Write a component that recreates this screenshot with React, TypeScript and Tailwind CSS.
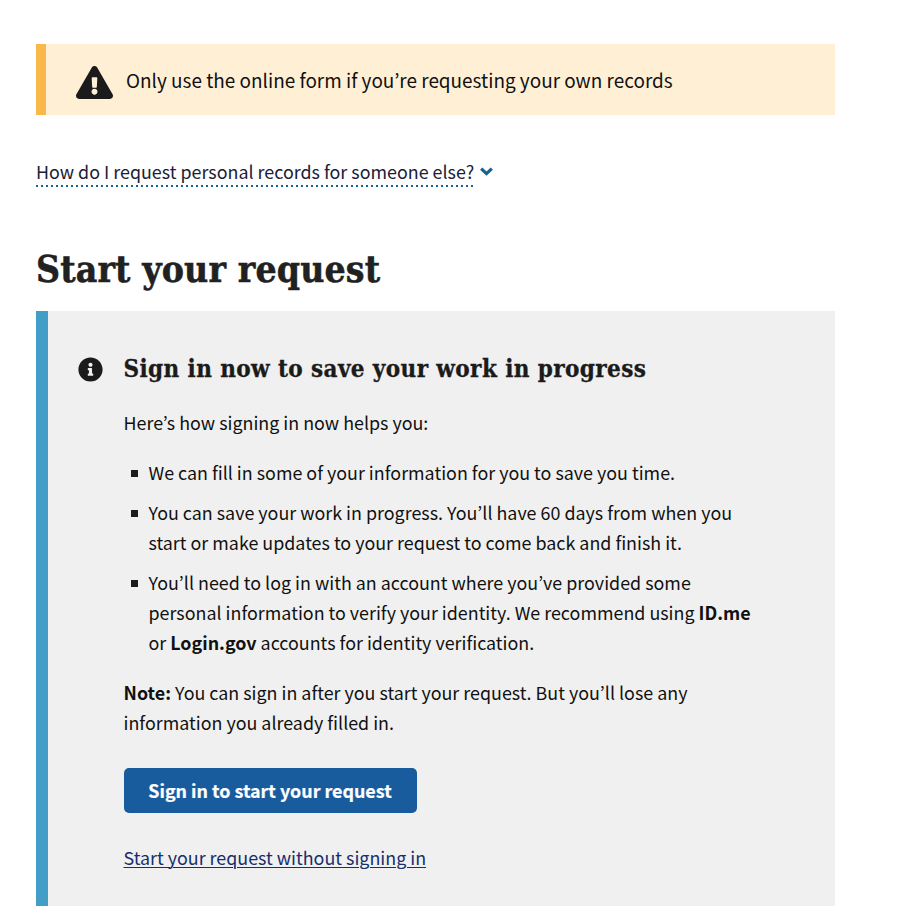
import type { ReactNode } from "react";
import { FaExclamationTriangle, FaInfoCircle } from "react-icons/fa";

function Line({ children }: { children: ReactNode }) {
  return <span className="block whitespace-nowrap">{children}</span>;
}

function Item({ children }: { children: ReactNode }) {
  return (
    <li className="flex">
      <span className="mt-[13px] mr-[11px] ml-[7.5px] h-[6.5px] w-[6.5px] shrink-0 bg-[#1b1b1b]" />
      <div>{children}</div>
    </li>
  );
}

export default function App() {
  return (
    <main className="h-[906px] w-[900px] overflow-hidden bg-white pt-[44px] pl-[36px] font-['Noto_Sans_CJK_KR','Noto_Sans',sans-serif] text-[17.89px] leading-[30px] text-[#111111]">
      <div className="flex h-[71px] w-[799px] border-l-[10px] border-[#fab84a] bg-[#fff0d5] pt-[21px] pl-[30px]">
        <FaExclamationTriangle className="mt-[1px] h-[33px] w-[37px] shrink-0 text-[#1b1b1b]" />
        <p className="ml-[13px] text-[18.95px] whitespace-nowrap">Only use the online form if you’re requesting your own records</p>
      </div>

      <div className="mt-[41px] flex h-[31px]">
        <button className="flex h-[31px] flex-col whitespace-nowrap text-[#1a2036]">
          <span className="h-[29px] leading-[30px]">How do I request personal records for someone else?</span>
          <span className="h-[2px] w-full bg-[repeating-linear-gradient(90deg,#16648f_0px,#16648f_2px,transparent_2px,transparent_5px)]" />
        </button>
        <svg className="mt-[11px] ml-[6.3px] h-[9px] w-[13px] text-[#16648f]" viewBox="0 0 13 9" fill="none" stroke="currentColor" strokeWidth="3.3">
          <path d="M1.2 1.6 L6.5 6.6 L11.8 1.6" />
        </svg>
      </div>

      <h2 className="mt-[57px] h-[50px] font-['DejaVu_Serif_Condensed','DejaVu_Serif',serif] text-[37px] leading-[50px] font-bold tracking-[0.13px] whitespace-nowrap text-[#212121] [-webkit-text-stroke:0.5px_#212121]">
        Start your request
      </h2>

      <section className="mt-[17px] flex h-[620px] w-[799px] border-l-[12px] border-[#439ec7] bg-[#f0f0f0] pt-[42px] pl-[30px]">
        <FaInfoCircle className="mt-[4px] h-[25px] w-[25px] shrink-0 text-[#1b1b1b]" />
        <div className="ml-[20.5px]">
          <h3 className="h-[30px] font-['DejaVu_Serif_Condensed','DejaVu_Serif',serif] text-[24px] leading-[31px] font-bold tracking-[0.39px] whitespace-nowrap text-[#1b1b1b] [-webkit-text-stroke:0.3px_#1b1b1b]">
            Sign in now to save your work in progress
          </h3>
          <p className="mt-[24px]">Here’s how signing in now helps you:</p>
          <ul className="mt-[20px] flex flex-col gap-[10px]">
            <Item><Line>We can fill in some of your information for you to save you time.</Line></Item>
            <Item>
              <Line>You can save your work in progress. You’ll have 60 days from when you</Line>
              <Line>start or make updates to your request to come back and finish it.</Line>
            </Item>
            <Item>
              <Line>You’ll need to log in with an account where you’ve provided some</Line>
              <Line>personal information to verify your identity. We recommend using <b>ID.me</b></Line>
              <Line>or <b>Login.gov</b> accounts for identity verification.</Line>
            </Item>
          </ul>
          <p className="mt-[20px]">
            <Line><b>Note:</b> You can sign in after you start your request. But you’ll lose any</Line>
            <Line>information you already filled in.</Line>
          </p>
          <button className="mt-[31px] block h-[45px] w-[293px] rounded-[5px] bg-[#195c9e] text-center leading-[43px] font-bold whitespace-nowrap text-white [-webkit-text-stroke:0.2px_white]">
            Sign in to start your request
          </button>
          <a className="mt-[29px] block w-fit whitespace-nowrap text-[#162e6e] underline decoration-1 underline-offset-[2px]">
            Start your request without signing in
          </a>
        </div>
      </section>
    </main>
  );
}
